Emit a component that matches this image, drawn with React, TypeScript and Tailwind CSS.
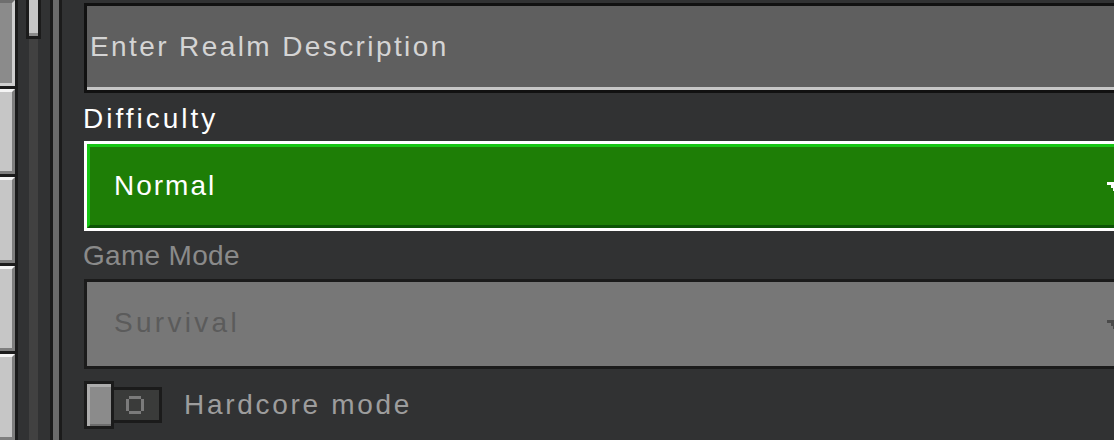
import React from 'react';

const font = { fontFamily: '"Liberation Sans", Arial, sans-serif' };

const Tab = ({ pressed }: { pressed?: boolean }) =>
  pressed ? (
    <div className="h-[87px] w-[15px] border-t-[3px] border-r-[3px] border-b-[3px] border-t-[#6f6f6f] border-r-[#cfcfcf] border-b-[#cfcfcf] bg-[#8b8b8b]" />
  ) : (
    <div className="h-[87px] w-[15px] border-t-[3px] border-r-[3px] border-b-[3px] border-t-[#f4f4f4] border-r-[#7e7e7e] border-b-[#7e7e7e] bg-[#c6c6c6]" />
  );

const Chevron = ({ color }: { color: string }) => (
  <svg width="15" height="9" viewBox="0 0 15 9" className="shrink-0">
    <rect x="0" y="0" width="15" height="3" fill={color} />
    <rect x="4" y="3" width="7" height="3" fill={color} />
    <rect x="6" y="6" width="3" height="3" fill={color} />
  </svg>
);

const OffRing = () => (
  <svg width="18" height="18" viewBox="0 0 18 18">
    <rect x="3" y="0" width="12" height="3" fill="#7b7b7b" />
    <rect x="3" y="15" width="12" height="3" fill="#7b7b7b" />
    <rect x="0" y="3" width="3" height="12" fill="#7b7b7b" />
    <rect x="15" y="3" width="3" height="12" fill="#7b7b7b" />
  </svg>
);

export default function App() {
  return (
    <div className="flex h-[440px] w-[1114px] overflow-hidden bg-[#313233]" style={font}>
      {/* side tabs */}
      <div className="flex w-[15px] shrink-0 flex-col">
        <Tab pressed />
        <div className="h-[3px] bg-[#1b1b1b]" />
        <Tab />
        <div className="h-[3px] bg-[#1b1b1b]" />
        <Tab />
        <div className="h-[3px] bg-[#1b1b1b]" />
        <Tab />
        <div className="h-[3px] bg-[#1b1b1b]" />
        <Tab />
      </div>
      <div className="w-[3px] shrink-0 bg-[#1b1b1b]" />

      {/* scroll track */}
      <div className="flex w-[32px] shrink-0">
        <div className="ml-[11px] flex w-[9px] flex-col bg-[#414141]">
          <div className="-ml-[3px] flex h-[39px] w-[15px] shrink-0 flex-col border-x-[3px] border-b-[3px] border-[#1b1b1b]">
            <div className="flex-1 bg-[#c6c6c6]" />
            <div className="h-[3px] bg-[#8b8b8b]" />
          </div>
        </div>
      </div>
      <div className="w-[3px] shrink-0 bg-[#1b1b1b]" />
      <div className="w-[6px] shrink-0 bg-[#6b6b6b]" />
      <div className="w-[3px] shrink-0 bg-[#1b1b1b]" />

      {/* settings */}
      <div className="flex min-w-0 flex-1 flex-col pl-[22px] pt-[3px]">
        <div className="flex h-[90px] w-[1060px] shrink-0 flex-col border-[3px] border-b-0 border-[#111111]">
          <div className="flex flex-1 items-center bg-[#5f5f5f] pl-[3px]">
            <span className="text-[28px] leading-[28px] tracking-[2.4px] text-[#d4d4d4]">Enter Realm Description</span>
          </div>
          <div className="h-[3px] bg-[#c6c6c6]" />
          <div className="h-[3px] bg-[#111111]" />
        </div>

        <div className="-ml-[1px] mt-[12px] h-[28px] text-[28px] leading-[28px] tracking-[3px] text-white">Difficulty</div>

        <div className="mt-[8px] h-[90px] w-[1060px] shrink-0 border-[3px] border-white">
          <div className="flex h-full items-center border-t-[3px] border-l-[3px] border-b-[3px] border-t-[#17c614] border-l-[#17c614] border-b-[#0d5406] bg-[#1e7e06] pl-[24px] pr-[19px]">
            <span className="text-[28px] leading-[28px] tracking-[2px] text-white">Normal</span>
            <div className="flex-1" />
            <Chevron color="#ffffff" />
          </div>
        </div>

        <div className="-ml-[1px] mt-[11px] h-[28px] text-[28px] leading-[28px] tracking-[0.3px] text-[#8a8a8a]">Game Mode</div>

        <div className="mt-[9px] h-[90px] w-[1060px] shrink-0 border-[3px] border-[#1b1b1b]">
          <div className="flex h-full items-center bg-[#777777] pl-[27px] pr-[19px]">
            <span className="mb-[3px] text-[28px] leading-[28px] tracking-[3.3px] text-[#5b5b5b]">Survival</span>
            <div className="flex-1" />
            <Chevron color="#4a4a4a" />
          </div>
        </div>

        <div className="mt-[12px] flex h-[48px] items-center">
          <div className="relative z-10 h-[48px] w-[30px] border-[3px] border-[#1b1b1b]">
            <div className="flex h-full flex-col border-l-[3px] border-t-[3px] border-[#adadad] bg-[#8b8b8b]">
              <div className="flex-1" />
              <div className="h-[2px] bg-[#6c6c6c]" />
            </div>
          </div>
          <div className="flex h-[36px] w-[48px] items-center border-y-[3px] border-r-[3px] border-[#1b1b1b] bg-[#3a3b3a] pl-[12px]">
            <OffRing />
          </div>
          <span className="ml-[22px] text-[28px] leading-[28px] tracking-[2.7px] text-[#9d9d9d]">Hardcore mode</span>
        </div>
      </div>
    </div>
  );
}
